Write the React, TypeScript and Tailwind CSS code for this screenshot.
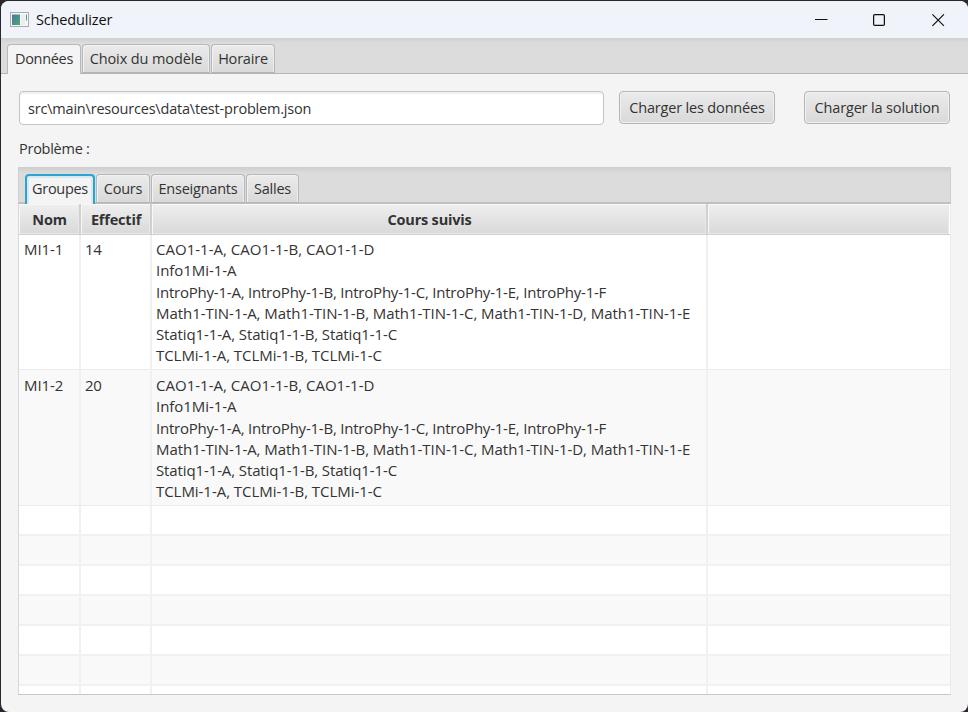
import React from "react";

type TabItem = { label: string; width: string; spacing: string; active?: boolean };

const mainTabs: TabItem[] = [
  { label: "Données", width: "w-[74px]", spacing: "tracking-[-0.3px]", active: true },
  { label: "Choix du modèle", width: "w-[128px]", spacing: "tracking-[-0.11px]" },
  { label: "Horaire", width: "w-[64px]", spacing: "tracking-[-0.2px]" },
];

const problemTabs: TabItem[] = [
  { label: "Groupes", width: "w-[70px]", spacing: "tracking-[-0.3px]", active: true },
  { label: "Cours", width: "w-[54px]", spacing: "tracking-[-0.25px]" },
  { label: "Enseignants", width: "w-[94px]", spacing: "tracking-[-0.22px]" },
  { label: "Salles", width: "w-[53px]", spacing: "tracking-[-0.25px]" },
];

type Line = { text: string; spacing: string };

const courses: Line[] = [
  { text: "CAO1-1-A, CAO1-1-B, CAO1-1-D", spacing: "tracking-[0.02px]" },
  { text: "Info1Mi-1-A", spacing: "tracking-[-0.05px]" },
  { text: "IntroPhy-1-A, IntroPhy-1-B, IntroPhy-1-C, IntroPhy-1-E, IntroPhy-1-F", spacing: "tracking-[-0.22px]" },
  { text: "Math1-TIN-1-A, Math1-TIN-1-B, Math1-TIN-1-C, Math1-TIN-1-D, Math1-TIN-1-E", spacing: "tracking-[-0.047px]" },
  { text: "Statiq1-1-A, Statiq1-1-B, Statiq1-1-C", spacing: "tracking-[-0.115px]" },
  { text: "TCLMi-1-A, TCLMi-1-B, TCLMi-1-C", spacing: "tracking-[-0.045px]" },
];

const groups = [
  { name: "MI1-1", size: "14", look: "h-[135px] bg-white" },
  { name: "MI1-2", size: "20", look: "h-[136px] bg-[#f9f9f9] pt-px" },
];

const columns = "grid grid-cols-[62px_71px_556px_243px]";

function WindowTab({ tab, focusable }: { tab: TabItem; focusable?: boolean }) {
  const look = tab.active
    ? focusable
      ? "border-2 border-b-0 border-[#2ba5d0] bg-[#f4f4f4] pb-[2px] shadow-[inset_2px_2px_0_#d5e9f0,inset_-2px_0_0_#d5e9f0]"
      : "border border-b-0 border-[#b8b8b8] bg-[#f4f4f4] pb-[2px]"
    : "border border-b-[#b5b5b5] border-[#b8b8b8] bg-linear-to-b from-[#ebebeb] to-[#d9d9d9] shadow-[inset_1px_1px_0_#f3f3f3,inset_-1px_0_0_#ececec]";
  return (
    <div className={`flex h-full items-center justify-center rounded-t-[4px] whitespace-nowrap ${tab.width} ${tab.spacing} ${look}`}>
      {tab.label}
    </div>
  );
}

function LoadButton({ label, className }: { label: string; className: string }) {
  return (
    <button
      className={`h-[33px] shrink-0 rounded-[4px] border border-[#b5b5b5] bg-linear-to-b from-[#ebebeb] to-[#d9d9d9] pt-px whitespace-nowrap shadow-[inset_0_0_0_1px_#f0f0f0] ${className}`}
    >
      {label}
    </button>
  );
}

function HeaderCell({ label, last }: { label: string; last?: boolean }) {
  return (
    <div
      className={`flex h-full items-center justify-center border-r-2 bg-linear-to-b from-[#efefef] to-[#d9d9d9] pt-px pl-px font-bold tracking-[-0.2px] shadow-[inset_1px_1px_0_#f8f8f8,inset_-1px_-1px_0_#e8e8e8] ${last ? "border-white" : "border-[#d0d0d0]"}`}
    >
      {label}
    </div>
  );
}

function TitleBar() {
  return (
    <header className="flex h-[37px] shrink-0 items-center bg-[#f0f3fa] pl-[9px]">
      <svg width="19" height="16" viewBox="0 0 19 16">
        <rect x="0.5" y="0.5" width="18" height="14" fill="#f5f7f7" stroke="#a9adb2" />
        <defs>
          <linearGradient id="pane" x1="0" y1="0" x2="1" y2="1">
            <stop offset="0" stopColor="#4877a2" />
            <stop offset="1" stopColor="#52a873" />
          </linearGradient>
        </defs>
        <rect x="2" y="2.5" width="8" height="10.5" fill="url(#pane)" />
        <rect x="11" y="2.5" width="4" height="10.5" fill="#e9efee" />
        <path d="M16.5 2.5v6" stroke="#4f9b91" />
      </svg>
      <h1 className="ml-[7px] text-[14.5px] tracking-[-0.15px] text-[#111]">Schedulizer</h1>
      <div className="ml-auto flex items-center pr-[23px]">
        <svg width="130" height="14" viewBox="0 0 130 14" fill="none" stroke="#111">
          <path d="M0 6.5h12.5" />
          <rect x="58.6" y="1.6" width="10.8" height="10.8" rx="1.2" strokeWidth="1.25" />
          <path d="M117.4 1.4l11.5 11.5M128.9 1.4l-11.5 11.5" strokeWidth="1.2" />
        </svg>
      </div>
    </header>
  );
}

export default function App() {
  return (
    <div className="h-[712px] w-[968px] overflow-hidden bg-[#2b282d] pt-px pl-px font-['Open_Sans','Noto_Sans',sans-serif] text-[14.5px] text-[#333]">
      <div className="flex h-full w-full flex-col overflow-hidden rounded-[8px] bg-[#f4f4f4]">
        <TitleBar />
        <nav className="flex h-[36px] shrink-0 gap-px border-b border-[#b5b5b5] bg-linear-to-b from-[#d0d0d0] via-[#dcdcdc] via-15% to-[#dcdcdc] pt-[6px] pl-[6px]">
          {mainTabs.map((tab) => (
            <div key={tab.label} className={tab.active ? "h-[30px]" : "h-[29px]"}>
              <WindowTab tab={tab} />
            </div>
          ))}
        </nav>
        <main className="flex min-h-0 flex-1 flex-col px-[17px] pt-[17px] pb-[17px]">
          <div className="flex shrink-0 items-start">
            <div className="ml-px flex h-[34px] w-[585px] shrink-0 items-center rounded-[4px] border border-[#c4c4c4] bg-white pt-px pl-[8px] tracking-[-0.2px] shadow-[inset_0_2px_1px_#f0f0f0]">
              src\main\resources\data\test-problem.json
            </div>
            <LoadButton label="Charger les données" className="ml-[15px] w-[156px] tracking-[-0.17px]" />
            <LoadButton label="Charger la solution" className="ml-[29px] w-[146px] tracking-[-0.15px]" />
          </div>
          <p className="mt-[13px] ml-px h-[22px] shrink-0 leading-[22px] tracking-[-0.26px]">Problème :</p>
          <section className="mt-[7px] flex min-h-0 w-[933px] flex-1 flex-col border-b border-[#c8c8c8]">
            <div className="flex h-[37px] shrink-0 gap-px border border-b-2 border-[#cfcfcf] border-b-[#c0c0c0] bg-linear-to-b from-[#d0d0d0] via-[#dcdcdc] via-15% to-[#dcdcdc] pt-[6px] pl-[6px]">
              {problemTabs.map((tab) => (
                <div key={tab.label} className={tab.active ? "z-1 h-[30px]" : "h-[29px]"}>
                  <WindowTab tab={tab} focusable />
                </div>
              ))}
            </div>
            <div className="min-h-0 flex-1 overflow-hidden border-x border-l-[#d8d8d8] border-r-[#ececec]">
              <div className={`${columns} h-[31px] border-b border-[#d0d0d0]`}>
                <HeaderCell label="Nom" />
                <HeaderCell label="Effectif" />
                <HeaderCell label="Cours suivis" />
                <HeaderCell label="" last />
              </div>
              {groups.map((group) => (
                <div key={group.name} className={`${columns} border-b border-[#ececec] text-[15px] leading-[21.2px] tracking-[-0.1px] ${group.look}`}>
                  <div className="border-r-2 border-[#f0f0f0] pt-[4.2px] pl-[5px]">{group.name}</div>
                  <div className="border-r-2 border-[#f0f0f0] pt-[4.2px] pl-[4px] tracking-[-0.3px]">{group.size}</div>
                  <div className="border-r-2 border-[#f0f0f0] pt-[4.2px] pl-[4px]">
                    {courses.map((line) => (
                      <div key={line.text} className={`w-max whitespace-nowrap ${line.spacing}`}>{line.text}</div>
                    ))}
                  </div>
                  <div />
                </div>
              ))}
              {[0, 1, 2, 3, 4, 5, 6].map((row) => (
                <div key={row} className={`${columns} h-[30px] border-b-2 border-[#f1f1f1] ${row % 2 ? "bg-[#f9f9f9]" : "bg-white"}`}>
                  <div className="border-r-2 border-[#f1f1f1]" />
                  <div className="border-r-2 border-[#f1f1f1]" />
                  <div className="border-r-2 border-[#f1f1f1]" />
                  <div />
                </div>
              ))}
            </div>
          </section>
        </main>
      </div>
    </div>
  );
}
